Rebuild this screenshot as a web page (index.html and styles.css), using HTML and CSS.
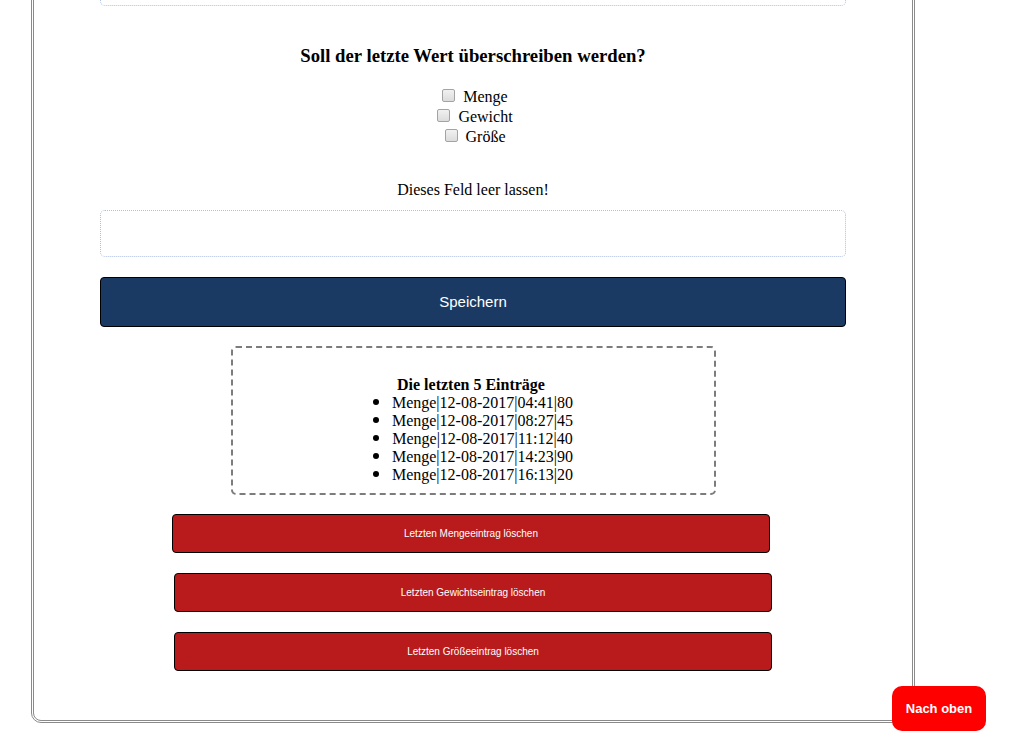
FILE: index.html
```html
<!DOCTYPE html>
<html lang="de">
<head>
<meta charset="utf-8">
<title>Eintrag</title>
<link rel="stylesheet" href="styles.css">
</head>
<body>
<div class="page">
  <form class="panel">
    <input class="field field-top" type="text">
    <h3 class="question">Soll der letzte Wert überschreiben werden?</h3>
    <div class="checks">
      <label class="check"><input type="checkbox"> Menge</label>
      <label class="check"><input type="checkbox"> Gewicht</label>
      <label class="check"><input type="checkbox"> Größe</label>
    </div>
    <p class="hint">Dieses Feld leer lassen!</p>
    <input class="field" type="text">
    <button class="save" type="button">Speichern</button>
    <div class="recent">
      <strong class="recent-title">Die letzten 5 Einträge</strong>
      <ul class="entries">
        <li>Menge|12-08-2017|04:41|80</li>
        <li>Menge|12-08-2017|08:27|45</li>
        <li>Menge|12-08-2017|11:12|40</li>
        <li>Menge|12-08-2017|14:23|90</li>
        <li>Menge|12-08-2017|16:13|20</li>
      </ul>
    </div>
    <button class="del del-first" type="button">Letzten Mengeeintrag löschen</button>
    <button class="del" type="button">Letzten Gewichtseintrag löschen</button>
    <button class="del" type="button">Letzten Größeeintrag löschen</button>
  </form>
</div>
<a class="to-top" href="#">Nach oben</a>
</body>
</html>
```
FILE: styles.css
```css
html, body {
  margin: 0;
  padding: 0;
  background: #fff;
  font-family: "Liberation Serif", "Times New Roman", serif;
  font-size: 16px;
  color: #000;
  overflow: hidden;
}

.page {
  width: 884px;
  margin-left: 31px;
  margin-top: -79px;
}

.panel {
  box-sizing: border-box;
  border: 3px double #8a8a8a;
  border-radius: 10px;
  padding: 35px 66px 49px 66px;
  display: flex;
  flex-direction: column;
  align-items: stretch;
}

.field {
  box-sizing: border-box;
  display: block;
  width: 746px;
  height: 47px;
  border: 1px dotted #aebfe0;
  border-radius: 5px;
  background: #fff;
  margin: 0;
  padding: 0 8px;
}

.question {
  margin: 39px 0 0;
  font-size: 18.72px;
  line-height: 22px;
  font-weight: bold;
  text-align: center;
}

.checks {
  margin-top: 19px;
  display: flex;
  flex-direction: column;
  align-items: center;
}

.check {
  display: block;
  box-sizing: border-box;
  height: 20px;
  padding-top: 1px;
  line-height: 20px;
  text-align: center;
}

.check input {
  -webkit-appearance: none;
  appearance: none;
  box-sizing: border-box;
  margin: 2px 4px 0 4px;
  width: 13px;
  height: 13px;
  border: 1px solid #a3a3a3;
  border-radius: 2px;
  background: linear-gradient(#f1f1f1, #dcdcdc);
  vertical-align: top;
}

.hint {
  margin: 35px 0 0;
  line-height: 18px;
  text-align: center;
}

.hint + .field {
  margin-top: 11px;
}

.save {
  box-sizing: border-box;
  margin-top: 20px;
  width: 746px;
  height: 50px;
  background: #1a3a63;
  color: #fff;
  border: 1px solid #000;
  border-radius: 4px;
  font-family: "Liberation Sans", Arial, sans-serif;
  font-size: 15px;
  padding: 0 0 2px;
}

.recent {
  box-sizing: border-box;
  align-self: center;
  width: 485px;
  margin-top: 19px;
  border: 2px dashed #7c7c7c;
  border-radius: 5px;
  padding: 28px 0 9px;
  text-align: center;
  line-height: 18px;
}

.recent-title {
  display: block;
  font-weight: bold;
  padding-right: 4px;
}

.entries {
  list-style: none;
  margin: 0;
  padding: 0;
}

.entries li {
  line-height: 18px;
}

.entries li::before {
  content: "";
  display: inline-block;
  width: 6px;
  height: 6px;
  border-radius: 50%;
  background: #000;
  margin-right: 13px;
  vertical-align: 3px;
}

.del {
  box-sizing: border-box;
  display: block;
  width: 598px;
  height: 39px;
  margin: 20px 0 0 74px;
  background: #b91b1c;
  color: #fff;
  border: 1px solid #000;
  border-radius: 4px;
  font-family: "Liberation Sans", Arial, sans-serif;
  font-size: 10px;
  padding: 0;
}

.del-first {
  margin-top: 19px;
  margin-left: 72px;
}

.to-top {
  position: fixed;
  left: 892px;
  top: 686px;
  width: 94px;
  height: 45px;
  box-sizing: border-box;
  background: #ff0000;
  color: #fff;
  border-radius: 10px;
  font-family: "Liberation Sans", Arial, sans-serif;
  font-weight: bold;
  font-size: 13px;
  text-decoration: none;
  display: flex;
  align-items: center;
  justify-content: center;
}
```
